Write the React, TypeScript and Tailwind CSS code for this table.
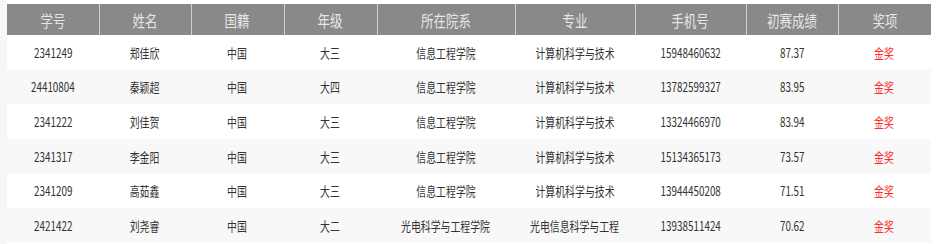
import React from 'react';

const cols = [
  { title: '学号', width: 'w-[92px]' },
  { title: '姓名', width: 'w-[92px]' },
  { title: '国籍', width: 'w-[93px]' },
  { title: '年级', width: 'w-[93px]' },
  { title: '所在院系', width: 'w-[138px]' },
  { title: '专业', width: 'w-[120px]' },
  { title: '手机号', width: 'w-[111px]' },
  { title: '初赛成绩', width: 'w-[92px]' },
  { title: '奖项', width: 'w-[93px]' },
];

const rows = [
  ['2341249', '郑佳欣', '中国', '大三', '信息工程学院', '计算机科学与技术', '15948460632', '87.37', '金奖'],
  ['24410804', '秦颖超', '中国', '大四', '信息工程学院', '计算机科学与技术', '13782599327', '83.95', '金奖'],
  ['2341222', '刘佳贺', '中国', '大三', '信息工程学院', '计算机科学与技术', '13324466970', '83.94', '金奖'],
  ['2341317', '李金阳', '中国', '大三', '信息工程学院', '计算机科学与技术', '15134365173', '73.57', '金奖'],
  ['2341209', '高茹鑫', '中国', '大三', '信息工程学院', '计算机科学与技术', '13944450208', '71.51', '金奖'],
  ['2421422', '刘尧睿', '中国', '大二', '光电科学与工程学院', '光电信息科学与工程', '13938511424', '70.62', '金奖'],
];

const App: React.FC = () => {
  return (
    <div className="w-[945px] h-[244px] bg-white flex font-['Noto_Sans_CJK_SC',sans-serif] overflow-hidden">
      {/* left edge strip */}
      <div className="w-[7px] bg-[#f7f7f7] shrink-0" />

      <div className="pt-[4px]">
        <table className="table-fixed border-collapse w-[924px]">
          <thead>
            <tr className="h-[31px] bg-[#898989]">
              {cols.map((c, i) => (
                <th
                  key={c.title}
                  className={`${c.width} p-0 font-normal text-[16px] text-[#e6e6e6] ${i > 0 ? 'border-l border-[#d0d0d0]' : ''}`}
                >
                  <span className="inline-block scale-x-[0.78] whitespace-nowrap">{c.title}</span>
                </th>
              ))}
            </tr>
          </thead>
          <tbody>
            {rows.map((r, ri) => (
              <tr key={ri} className={`h-[34.67px] ${ri % 2 === 1 ? 'bg-[#f8f8f8]' : 'bg-white'}`}>
                {r.map((cell, ci) => (
                  <td
                    key={ci}
                    className={`p-0 text-center text-[13px] ${ci === 8 ? 'text-[#ff2b2b]' : 'text-[#333333]'}`}
                  >
                    <span className="inline-block scale-x-[0.76] whitespace-nowrap">{cell}</span>
                  </td>
                ))}
              </tr>
            ))}
          </tbody>
        </table>
      </div>
    </div>
  );
};

export default App;
